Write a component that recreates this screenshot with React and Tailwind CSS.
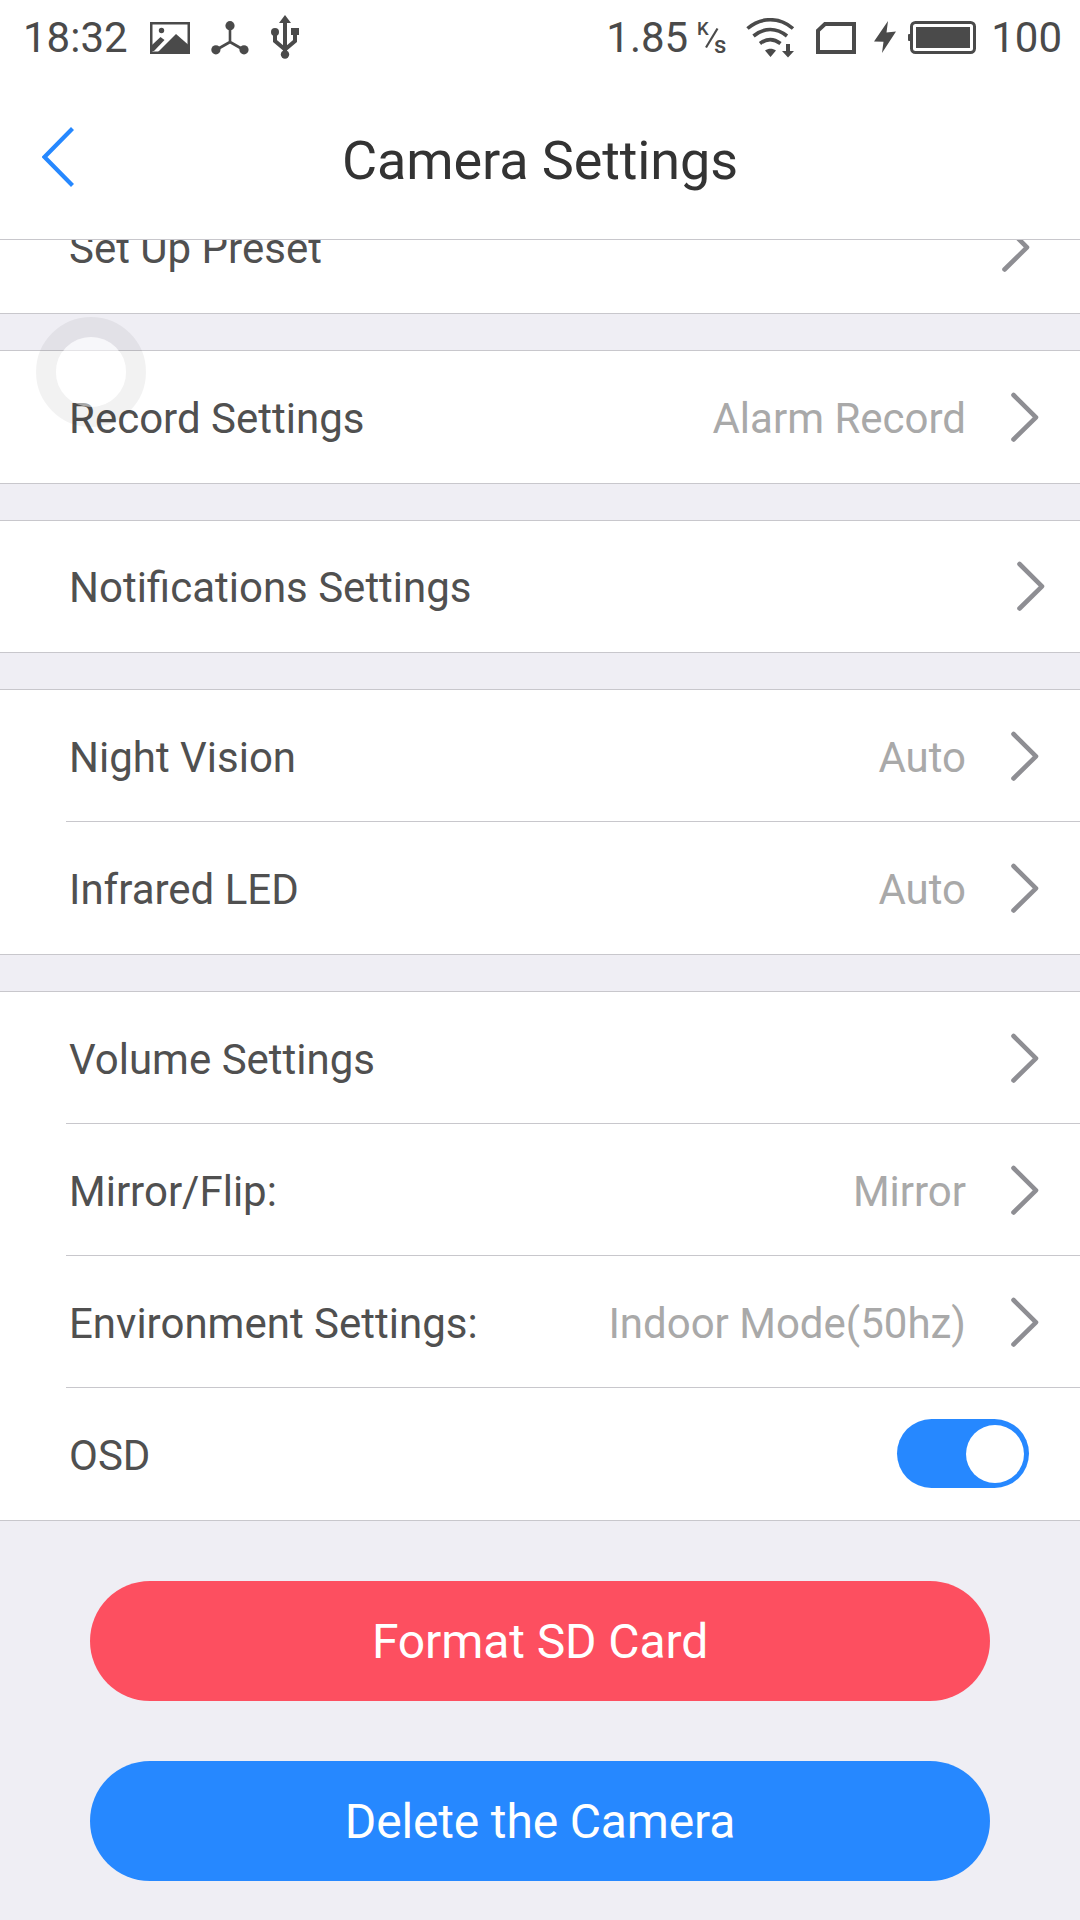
const groups = [
  {
    id: "record",
    rows: [{ label: "Record Settings", value: "Alarm Record", arrow: "mr-[41px]" }],
  },
  {
    id: "notifications",
    rows: [{ label: "Notifications Settings", arrow: "mr-[35px]", height: "h-[130px]" }],
  },
  {
    id: "light",
    rows: [
      { label: "Night Vision", value: "Auto", arrow: "mr-[41px]" },
      { label: "Infrared LED", value: "Auto", arrow: "mr-[41px]" },
    ],
  },
  {
    id: "image",
    rows: [
      { label: "Volume Settings", arrow: "mr-[41px]" },
      { label: "Mirror/Flip:", value: "Mirror", arrow: "mr-[41px]" },
      { label: "Environment Settings:", value: "Indoor Mode(50hz)", arrow: "mr-[41px]" },
      { label: "OSD", toggle: true },
    ],
  },
];

export default function App() {
  return (
    <div className="relative flex h-[1920px] w-[1080px] flex-col overflow-hidden bg-[#efeef4] font-['Roboto',sans-serif]">
      <StatusBar />
      <Header title="Camera Settings" />

      <main className="flex flex-col">
        {/* First row is scrolled partly under the header */}
        <div className="flex h-[74px] flex-col justify-end overflow-hidden border-b border-[#c8c7cc] bg-white pb-px">
          <Row label="Set Up Preset" arrow="mr-[50px]" />
        </div>

        {groups.map((group) => (
          <section key={group.id} className="mt-9 border-y border-[#c8c7cc] bg-white pb-px">
            {group.rows.map((row, i) => (
              <div key={row.label}>
                {i > 0 && <div className="ml-[66px] h-px bg-[#c8c7cc]" />}
                <Row {...row} />
              </div>
            ))}
          </section>
        ))}

        <div className="mt-[60px] flex flex-col gap-[60px] px-[90px]">
          <button className="h-[120px] rounded-full bg-[#fd4f60] pt-[2px] text-5xl tracking-[-0.1px] text-white">
            Format SD Card
          </button>
          <button className="h-[120px] rounded-full bg-[#2688ff] pt-[2px] text-5xl tracking-[-0.15px] text-white">
            Delete the Camera
          </button>
        </div>
      </main>

      {/* Floating touch button */}
      <div className="absolute left-9 top-[317px] flex size-[110px] rounded-full border-[20px] border-black/5">
        <div className="size-full rounded-full bg-white/50" />
      </div>
    </div>
  );
}

/* ---------- Rows ---------- */

function Row({ label, value, arrow, toggle, height = "h-[131px]" }) {
  return (
    <div className={`flex shrink-0 items-center pl-[69px] text-[42px] leading-none ${height}`}>
      <span className="flex-1 pt-1 text-[#505050]">{label}</span>
      {value && <span className="mr-[45px] pt-1 text-[#a9a9a9]">{value}</span>}
      {toggle ? (
        <div className="mr-[51px] flex h-[69px] w-[132px] items-center justify-end rounded-full bg-[#2688ff] pr-[5px]">
          <div className="size-[58px] rounded-full bg-white" />
        </div>
      ) : (
        <svg className={arrow} width="28" height="50" viewBox="0 0 28 50" fill="none">
          <path
            d="M2.5 3 25 25.3 2.5 47.5"
            stroke="#8e8e93"
            strokeWidth="4.6"
            strokeLinecap="round"
            strokeLinejoin="round"
          />
        </svg>
      )}
    </div>
  );
}

/* ---------- Top bars ---------- */

function Header({ title }) {
  return (
    <header className="flex h-[164px] shrink-0 items-center border-b border-[#c8c7cc] bg-white px-[42px]">
      <svg className="mb-[2px] w-8 shrink-0" height="60" viewBox="0 0 32 60" fill="none">
        <path d="M30.5 1.5 2.5 30l28 28.5" stroke="#2688ff" strokeWidth="4.2" />
      </svg>
      <h1 className="flex-1 pr-8 pt-[6px] text-center text-[54px] leading-none tracking-[-0.1px] text-[#333]">
        {title}
      </h1>
    </header>
  );
}

function StatusBar() {
  return (
    <div className="flex h-[76px] shrink-0 items-center justify-between bg-white pl-[23px] pr-[18px] text-[42px] leading-none text-[#4a4a4a]">
      <div className="flex items-center">
        <span className="w-[107px]">18:32</span>
        <svg className="ml-5" width="40" height="32" viewBox="0 0 40 32">
          <rect x="1.25" y="1.25" width="37.5" height="29.5" fill="none" stroke="currentColor" strokeWidth="2.5" />
          <circle cx="11.5" cy="8.5" r="2.7" fill="currentColor" />
          <path d="M2 23 10.5 15l4 3L4 29H2Z" fill="currentColor" />
          <path d="M8 30 26 12l12 10.5V30Z" fill="currentColor" />
          <path d="m9 27 7-7.5" stroke="#fff" strokeWidth="1.8" />
        </svg>
        <svg className="ml-[21px]" width="38" height="34" viewBox="0 0 38 34" fill="currentColor">
          <path d="M19 5v16M19 21 5 29M19 21l14 8" stroke="currentColor" strokeWidth="2.6" />
          <circle cx="19" cy="4.7" r="4.6" />
          <circle cx="4.9" cy="28.8" r="4.6" />
          <circle cx="33" cy="28.8" r="4.6" />
        </svg>
        <svg className="mb-[2px] ml-[21px]" width="30" height="44" viewBox="0 0 30 44" fill="currentColor">
          <path d="m15 0 6 8H9Z" />
          <path d="M15 6v32M5 17v9l10 8.5M25 15v11l-10 8.5" fill="none" stroke="currentColor" strokeWidth="4" />
          <circle cx="5" cy="17" r="4" />
          <rect x="21" y="13" width="8" height="7" />
          <circle cx="15" cy="39.5" r="4.2" />
        </svg>
      </div>

      <div className="flex items-center">
        <span>1.85</span>
        <svg className="ml-[9px]" width="32" height="46" viewBox="0 0 32 46" fill="currentColor">
          <text x="0" y="20" fontSize="18.5" fontWeight="500">K</text>
          <text x="17" y="37.5" fontSize="24" fontWeight="500">s</text>
          <path d="m9 32.5 11.5-19" stroke="currentColor" strokeWidth="2.2" />
        </svg>
        <svg className="ml-[17px]" width="50" height="40" viewBox="0 0 50 40" fill="none">
          <g stroke="currentColor" strokeWidth="3.6">
            <path d="M1.5 10.5C15-1.2 33.5-1.2 47 10.5" />
            <path d="M7.5 18C18 9.3 30.5 9.3 41 18" />
            <path d="M14 25.5c6.5-5 14-5 20.5 0" />
          </g>
          <path d="M19 32.5c3.5-2.5 7.5-2.5 11 0L24.5 39ZM40 26h4v7h4l-6 6.5-6-6.5h4Z" fill="currentColor" />
        </svg>
        <svg className="ml-[20px]" width="40" height="32" viewBox="0 0 40 32" fill="none">
          <path d="M2 30V8.5L9 2h29v28Z" stroke="currentColor" strokeWidth="4" />
        </svg>
        <svg className="mb-[2px] ml-[18px]" width="22" height="32" viewBox="0 0 22 32" fill="currentColor">
          <path d="M14 0 0 20.5l9.5.3L8 32 22 10.5l-9.500 1Z" />
        </svg>
        <svg className="ml-[12px]" width="68" height="34" viewBox="0 0 68 34" fill="currentColor">
          <rect x="3.5" y="1.5" width="63" height="30" rx="4" fill="none" stroke="currentColor" strokeWidth="3" />
          <rect x="8" y="6" width="54" height="21" />
          <rect x="0" y="13" width="3" height="7" rx="1" />
        </svg>
        <span className="ml-[15px]">100</span>
      </div>
    </div>
  );
}
